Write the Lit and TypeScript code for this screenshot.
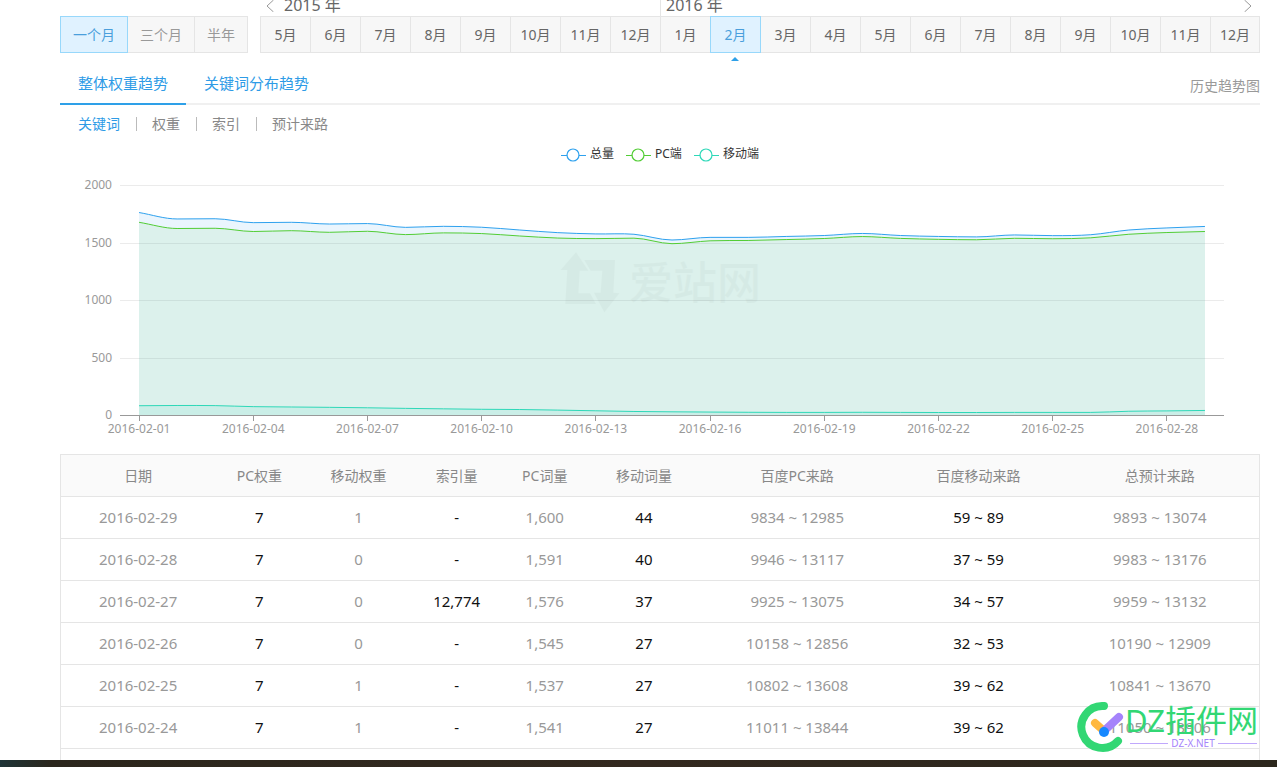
import { LitElement, html, svg, css } from "lit";
import { customElement, state } from "lit/decorators.js";
import { classMap } from "lit/directives/class-map.js";

const TOTAL = [1765, 1709, 1711, 1677, 1680, 1665, 1669, 1636, 1645, 1637, 1613, 1590, 1579, 1576, 1526, 1549, 1549, 1557, 1565, 1583, 1565, 1557, 1553, 1570, 1564, 1572, 1613, 1631, 1644];
const PC = [1680, 1626, 1628, 1600, 1607, 1593, 1602, 1573, 1588, 1582, 1561, 1543, 1538, 1542, 1494, 1519, 1522, 1530, 1539, 1556, 1540, 1532, 1528, 1541, 1537, 1545, 1576, 1591, 1600];
const MOBILE = [85, 87, 86, 77, 74, 71, 67, 62, 58, 54, 52, 47, 41, 35, 32, 30, 28, 27, 27, 28, 27, 26, 26, 27, 27, 27, 37, 40, 44];

const ROWS = [
  ["2016-02-29", "7", "1", "-", "1,600", "44", "9834 ~ 12985", "59 ~ 89", "9893 ~ 13074"],
  ["2016-02-28", "7", "0", "-", "1,591", "40", "9946 ~ 13117", "37 ~ 59", "9983 ~ 13176"],
  ["2016-02-27", "7", "0", "12,774", "1,576", "37", "9925 ~ 13075", "34 ~ 57", "9959 ~ 13132"],
  ["2016-02-26", "7", "0", "-", "1,545", "27", "10158 ~ 12856", "32 ~ 53", "10190 ~ 12909"],
  ["2016-02-25", "7", "1", "-", "1,537", "27", "10802 ~ 13608", "39 ~ 62", "10841 ~ 13670"],
  ["2016-02-24", "7", "1", "-", "1,541", "27", "11011 ~ 13844", "39 ~ 62", "11050 ~ 13906"],
];

const FONT = css`"Noto Sans", "Noto Sans CJK SC", sans-serif`;

@customElement("trend-chart")
class TrendChart extends LitElement {
  static styles = css`
    :host { display: block; font-family: ${FONT}; }
    svg { display: block; width: 100%; height: auto; }
    .legend { font-size: 12px; fill: #333; }
    .ylabel { font-size: 12px; fill: #999; text-anchor: end; }
    .xlabel { font-size: 12px; fill: #999; text-anchor: middle; }
    .grid { stroke: #ebebeb; }
    .axis { stroke: #999; }
    .line { fill: none; stroke-width: 1; }
    .mark { fill: #000; opacity: 0.025; }
    .markText { font-size: 44px; font-weight: 500; }
  `;

  private x(i: number) {
    return 60 + (1104 / 29) * (i + 0.5);
  }

  private y(v: number) {
    return 275.5 - v * 0.115;
  }

  // Monotone cubic interpolation: tangents go flat at local extremes.
  private curve(data: number[]) {
    const step = 1104 / 29;
    const ys = data.map((v) => this.y(v));
    const slope = ys.map((_, i) => {
      if (i === 0) return (ys[1] - ys[0]) / step;
      if (i === ys.length - 1) return (ys[i] - ys[i - 1]) / step;
      const a = ys[i] - ys[i - 1];
      const b = ys[i + 1] - ys[i];
      return a * b <= 0 ? 0 : (a + b) / 2 / step;
    });
    let d = `M${this.x(0)} ${ys[0]}`;
    for (let i = 1; i < ys.length; i++) {
      const h = step / 3;
      d += `C${this.x(i - 1) + h} ${ys[i - 1] + slope[i - 1] * h} ${this.x(i) - h} ${ys[i] - slope[i] * h} ${this.x(i)} ${ys[i]}`;
    }
    return d;
  }

  private series(data: number[], color: string, fill: string) {
    const d = this.curve(data);
    return svg`
      <path d="${d}V275.5H${this.x(0)}Z" fill=${fill} fill-opacity="0.1"></path>
      <path class="line" d=${d} stroke=${color}></path>`;
  }

  private legend(x: number, label: string, color: string) {
    return svg`
      <path d="M${x} 15.5h25" stroke=${color}></path>
      <circle cx=${x + 12} cy="15" r="6" fill="#fff" stroke=${color} stroke-width="1.2"></circle>
      <text class="legend" x=${x + 29} y="18">${label}</text>`;
  }

  render() {
    const dates = [1, 4, 7, 10, 13, 16, 19, 22, 25, 28];
    return html`
      <svg viewBox="0 0 1200 314" role="img" aria-label="关键词趋势">
        ${this.legend(501, "总量", "#2ea1ee")}
        ${this.legend(566, "PC端", "#52cd35")}
        ${this.legend(634, "移动端", "#2ed8b8")}
        ${[2000, 1500, 1000, 500, 0].map((v) => {
          const y = Math.floor(this.y(v) + 0.3) + 0.5;
          return svg`
            ${v ? svg`<path class="grid" d="M60 ${y}H1164"></path>` : ""}
            <text class="ylabel" x="52" y=${y + 3}>${v}</text>`;
        })}
        ${this.series(TOTAL, "#2ea1ee", "#2ea1ee")}
        ${this.series(PC, "#52cd35", "#62cd55")}
        ${this.series(MOBILE, "#2ed8b8", "#2ed8b8")}
        <path class="axis" d="M60 275.5H1164"></path>
        ${dates.map((n) => {
          const x = this.x(n - 1);
          return svg`
            <path class="axis" d="M${Math.floor(x) + 0.5} 276v5"></path>
            <text class="xlabel" x=${x} y="293">2016-02-${String(n).padStart(2, "0")}</text>`;
        })}
        <g class="mark">
          <g transform="translate(480 0) scale(0.3333)">
            <path d="M108 337L62 390L82 390L76 492L168 492L150 460L115 460L119 392L145 392Z"></path>
            <path d="M133 360L225 360L220 458L238 460L193 517L162 458L182 458L187 392L152 392Z"></path>
          </g>
          <text class="markText" x="569" y="159">爱站网</text>
        </g>
      </svg>`;
  }
}

@customElement("site-stamp")
class SiteStamp extends LitElement {
  static styles = css`
    :host { display: block; font-family: ${FONT}; }
    svg { display: block; }
    .name { font-size: 31px; fill: #32d774; }
    .site { font-size: 10px; fill: #a583fb; text-anchor: middle; }
    .stroke { fill: none; stroke-linecap: round; stroke-width: 8; }
  `;

  render() {
    return html`
      <svg width="184" height="54" viewBox="0 0 184 54" role="img" aria-label="DZ插件网">
        <path class="stroke" stroke="#32d774" d="M28 6A21 21 0 1 0 42 41"></path>
        <path class="stroke" stroke="#ffb83f" d="M19 23L28 31"></path>
        <path class="stroke" stroke="#a583fb" d="M28 31L43 17"></path>
        <circle cx="28" cy="32" r="5" fill="#1688ff"></circle>
        <text class="name" x="49" y="32">DZ插件网</text>
        <path d="M54 43.5h38M142 43.5h39" stroke="#a583fb" stroke-opacity="0.7"></path>
        <text class="site" x="117" y="47">DZ-X.NET</text>
      </svg>`;
  }
}

@customElement("app-root")
class AppRoot extends LitElement {
  static styles = css`
    :host {
      display: flex;
      flex-direction: column;
      height: 100vh;
      overflow: hidden;
      position: relative;
      background: #fff;
      color: #666;
      font-family: ${FONT};
      font-size: 14px;
    }
    * { box-sizing: border-box; }
    button { font: inherit; color: inherit; background: none; border: 0; padding: 0; cursor: pointer; }
    a { color: inherit; text-decoration: none; }
    main {
      flex: 1;
      min-height: 0;
      display: flex;
      flex-direction: column;
      padding: 0 17px 0 60px;
    }
    .periods { display: grid; grid-template-columns: 188px 1fr; column-gap: 12px; align-items: end; }
    .ranges { display: flex; color: #999; }
    .ranges .cell { padding: 0 12px 2px; }
    .years { display: grid; grid-template-columns: 2fr 3fr; height: 16px; font-size: 16px; line-height: 11px; }
    .year { display: flex; gap: 10px; padding: 0 6px; }
    .year + .year { border-left: 1px solid #e5e5e5; padding: 0 8px 0 5px; justify-content: space-between; }
    .arrow { width: 8px; height: 12px; }
    .arrow svg { display: block; fill: none; stroke: #999; }
    .months { display: grid; grid-template-columns: repeat(20, 1fr); }
    .cell {
      position: relative;
      height: 37px;
      padding-bottom: 2px;
      border: 1px solid #e5e5e5;
      background: #f7f7f7;
      margin-right: -1px;
      white-space: nowrap;
    }
    .cell:last-child { margin-right: 0; }
    .cell.on { z-index: 1; color: #4a9fdc; background: #e0f2ff; border-color: #98d8fb; }
    .months .on::after {
      content: "";
      position: absolute;
      left: 50%;
      top: 40px;
      margin-left: -5px;
      border: 4px solid transparent;
      border-top: 0;
      border-bottom-color: #2ea0e8;
    }
    .tabs { display: flex; height: 52px; border-bottom: 2px solid #f0f0f0; color: #2e9be6; font-size: 15px; }
    .tab { height: 52px; padding: 10px 18px 2px; margin-bottom: -2px; line-height: 24px; }
    .tab.on { border-bottom: 2px solid #2ea0e8; padding-bottom: 0; }
    .history { margin-left: auto; align-self: center; padding-top: 14px; color: #999; font-size: 14px; }
    .subnav { display: flex; align-items: center; height: 38px; padding: 0 0 2px 18px; color: #888; }
    .subnav button + button::before {
      content: "";
      display: inline-block;
      width: 1px;
      height: 14px;
      margin: 0 15px 0 16px;
      background: #bbb;
      vertical-align: -2px;
    }
    .subnav .on { color: #2e9be6; }
    trend-chart { flex: none; margin-top: -3px; }
    .sheet { flex: 1; border: 1px solid #e5e5e5; border-width: 0 1px; }
    table { width: 100%; table-layout: fixed; border-collapse: collapse; text-align: center; }
    tr { height: 42px; }
    th, td { padding: 0 0 2px; border: 1px solid #e5e5e5; border-width: 1px 0; }
    th { background: #fafafa; color: #888; font-weight: 400; }
    td { font-size: 15px; line-height: 20px; color: #999; }
    td:nth-child(even) { color: #111; }
    .c-date { width: 154px; }
    .c-weight { width: 88px; }
    .c-mweight { width: 110px; }
    .c-index { width: 86px; }
    .c-words { width: 90px; }
    .c-mwords { width: 108px; }
    .c-visits { width: 198px; }
    .c-mvisits { width: 164px; }
    footer { flex: none; height: 7px; background: linear-gradient(90deg, #1e3437, #2b261c 4%, #33291f 50%, #2c271c); }
    site-stamp { position: absolute; right: 17px; bottom: 13px; }
  `;

  @state() private range = 0;
  @state() private month = 9;
  @state() private tab = 0;
  @state() private metric = 0;

  render() {
    const months = [5, 6, 7, 8, 9, 10, 11, 12, 1, 2, 3, 4, 5, 6, 7, 8, 9, 10, 11, 12];
    const cols = ["c-date", "c-weight", "c-mweight", "c-index", "c-words", "c-mwords", "c-visits", "c-mvisits", "c-visits"];
    const heads = ["日期", "PC权重", "移动权重", "索引量", "PC词量", "移动词量", "百度PC来路", "百度移动来路", "总预计来路"];
    return html`
      <main>
        <div class="periods">
          <div class="ranges">
            ${["一个月", "三个月", "半年"].map((t, i) => html`<button class=${classMap({ cell: true, on: i === this.range })} @click=${() => (this.range = i)}>${t}</button>`)}
          </div>
          <div>
            <div class="years">
              <div class="year">
                <button class="arrow" aria-label="上一页"><svg width="8" height="12"><path d="M7.5 0L1 6L7.5 12"></path></svg></button>
                <span>2015 年</span>
              </div>
              <div class="year">
                <span>2016 年</span>
                <button class="arrow" aria-label="下一页"><svg width="8" height="12"><path d="M.5 0L7 6L.5 12"></path></svg></button>
              </div>
            </div>
            <div class="months">
              ${months.map((m, i) => html`<button class=${classMap({ cell: true, on: i === this.month })} @click=${() => (this.month = i)}>${m}月</button>`)}
            </div>
          </div>
        </div>
        <nav class="tabs">
          ${["整体权重趋势", "关键词分布趋势"].map((t, i) => html`<button class=${classMap({ tab: true, on: i === this.tab })} @click=${() => (this.tab = i)}>${t}</button>`)}
          <a class="history" href="#history">历史趋势图</a>
        </nav>
        <nav class="subnav">
          ${["关键词", "权重", "索引", "预计来路"].map((t, i) => html`<button class=${classMap({ on: i === this.metric })} @click=${() => (this.metric = i)}>${t}</button>`)}
        </nav>
        <trend-chart></trend-chart>
        <div class="sheet">
          <table>
            <colgroup>${cols.map((c) => html`<col class=${c} />`)}</colgroup>
            <thead><tr>${heads.map((h) => html`<th scope="col">${h}</th>`)}</tr></thead>
            <tbody>${ROWS.map((r) => html`<tr>${r.map((c) => html`<td>${c}</td>`)}</tr>`)}</tbody>
          </table>
        </div>
      </main>
      <footer></footer>
      <site-stamp></site-stamp>`;
  }
}
